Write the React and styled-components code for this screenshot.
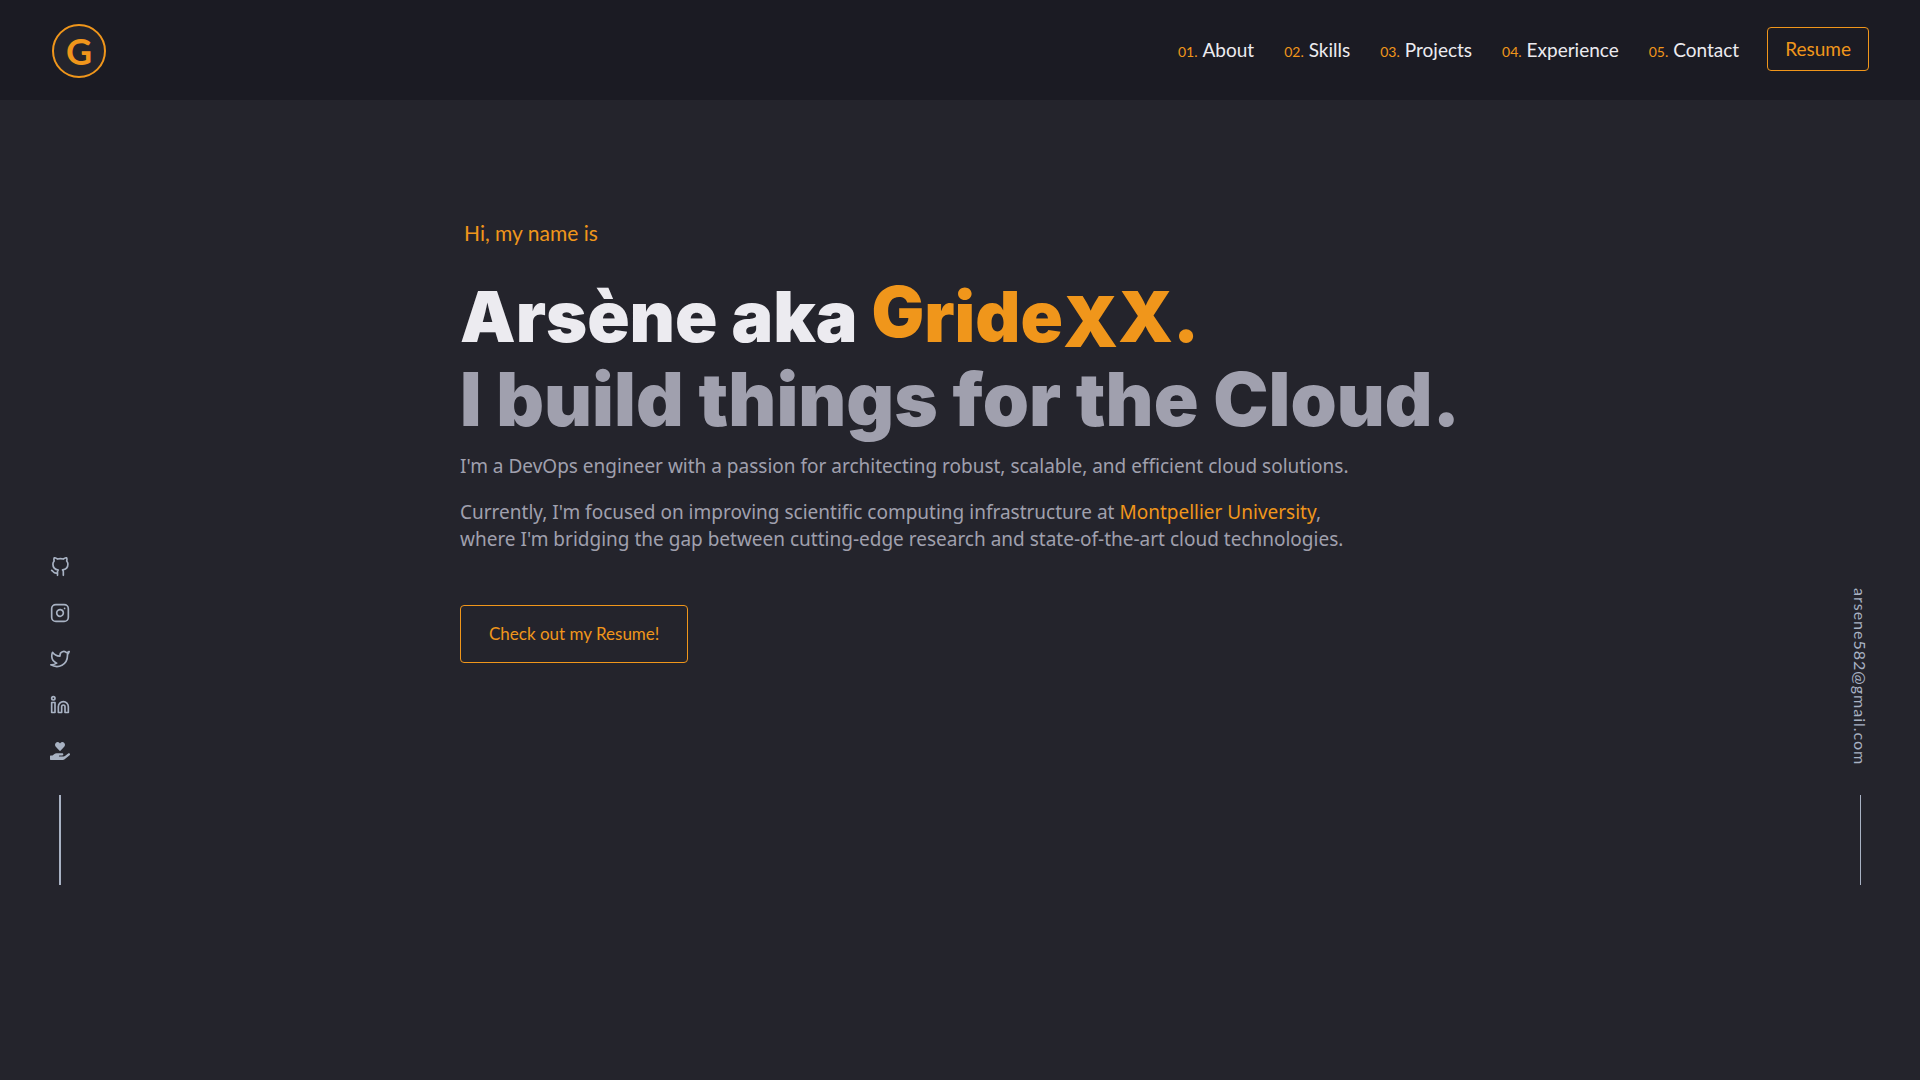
import React from "react";
import styled, { createGlobalStyle } from "styled-components";
import { FiGithub, FiInstagram, FiTwitter, FiLinkedin } from "react-icons/fi";
import { FaHandHoldingHeart } from "react-icons/fa";

const color = {
  page: "#24242c",
  header: "#1b1b23",
  accent: "#f0961b",
  light: "#ecebf0",
  muted: "#a0a0ae",
  slate: "#a8b2c3",
};

const display = `Inter, "Open Sans", sans-serif`;
const ui = `Lato, "Open Sans", sans-serif`;
const copy = `"Noto Sans", "Open Sans", sans-serif`;

const GlobalStyle = createGlobalStyle`
  *, *::before, *::after { box-sizing: border-box; }
  body {
    margin: 0;
    background: ${color.page};
    color: ${color.muted};
    font-family: ${ui};
  }
  a { color: inherit; text-decoration: none; }
`;

const Page = styled.div`
  min-height: 100vh;
  display: flex;
  flex-direction: column;
`;

const Header = styled.header`
  height: 100px;
  flex: none;
  display: flex;
  align-items: center;
  justify-content: space-between;
  padding: 2px 51px 0 52px;
  background: ${color.header};
`;

const Logo = styled.a`
  width: 54px;
  height: 54px;
  display: flex;
  align-items: center;
  justify-content: center;
  border: 2px solid ${color.accent};
  border-radius: 50%;
  background: ${color.page};
  && { color: ${color.accent}; }
  font: 700 36px/50px ${ui};
`;

const Nav = styled.nav`
  display: flex;
  align-items: center;
  gap: 28px;
`;

const NavList = styled.ol`
  display: flex;
  gap: 30px;
  margin: 0;
  padding: 0;
  list-style: none;
`;

const NavLink = styled.a`
  display: flex;
  align-items: baseline;
  gap: 5px;
  font-size: 19px;
  line-height: 24px;
  && { color: ${color.light}; }
`;

const NavNumber = styled.span`
  font-size: 14px;
  color: ${color.accent};
`;

const OutlineButton = styled.button`
  height: ${(p) => (p.$large ? 58 : 44)}px;
  margin-bottom: ${(p) => (p.$large ? 0 : 4)}px;
  padding: 0 ${(p) => (p.$large ? 28 : 17)}px 2px;
  border: 1px solid ${color.accent};
  border-radius: 4px;
  background: transparent;
  color: ${color.accent};
  font-family: ${ui};
  font-size: ${(p) => (p.$large ? 17 : 19)}px;
  cursor: pointer;
`;

const Body = styled.div`
  flex: 1;
  display: grid;
  grid-template-columns: 120px minmax(0, 1fr) 120px;
`;

const Rail = styled.aside`
  display: flex;
  flex-direction: column;
  align-items: center;
  justify-content: flex-end;
  gap: ${(p) => p.$gap}px;
  padding-bottom: 195px;
  color: ${color.slate};
`;

const RailLine = styled.span`
  width: ${(p) => p.$weight}px;
  height: 90px;
  background: ${color.slate};
`;

const SocialList = styled.ul`
  display: flex;
  flex-direction: column;
  gap: 26px;
  margin: 0;
  padding: 0;
  list-style: none;
`;

const SocialLink = styled.a`
  display: flex;
  font-size: 20px;
`;

const Email = styled.a`
  writing-mode: vertical-rl;
  font-size: 16px;
  line-height: 20px;
  letter-spacing: 1px;
`;

const Hero = styled.main`
  width: 100%;
  max-width: 1000px;
  margin: 0 auto;
  padding-top: 119px;
`;

const Greeting = styled.p`
  margin: 0 0 28px 4px;
  color: ${color.accent};
  font-size: 21px;
  line-height: 28px;
`;

const Headline = styled.h1`
  margin: 0;
  color: ${(p) => p.$tone};
  font: 900 ${(p) => p.$size}px/83px ${display};
  white-space: nowrap;
`;

const Brand = styled.span`
  color: ${color.accent};
`;

const Shifted = styled.span`
  display: inline-block;
  line-height: 1;
  vertical-align: ${(p) => p.$by}px;
`;

const Copy = styled.p`
  margin: 12px 0 0;
  font: 400 19px/27px ${copy};
  & + & { margin-top: 19px; }
  a { color: ${color.accent}; }
`;

const Action = styled.div`
  margin-top: 52px;
`;

const links = ["About", "Skills", "Projects", "Experience", "Contact"];

const socials = [
  ["GitHub", FiGithub],
  ["Instagram", FiInstagram],
  ["Twitter", FiTwitter],
  ["LinkedIn", FiLinkedin],
  ["Support me", FaHandHoldingHeart],
];

export default function App() {
  return (
    <Page>
      <GlobalStyle />
      <Header>
        <Logo href="#home" aria-label="Home">G</Logo>
        <Nav aria-label="Main">
          <NavList>
            {links.map((label, i) => (
              <li key={label}>
                <NavLink href={`#${label.toLowerCase()}`}>
                  <NavNumber>{`0${i + 1}.`}</NavNumber>
                  {label}
                </NavLink>
              </li>
            ))}
          </NavList>
          <OutlineButton type="button">Resume</OutlineButton>
        </Nav>
      </Header>
      <Body>
        <Rail $gap={34}>
          <SocialList>
            {socials.map(([name, Icon]) => (
              <li key={name}>
                <SocialLink href={`#${name}`} aria-label={name}>
                  <Icon />
                </SocialLink>
              </li>
            ))}
          </SocialList>
          <RailLine $weight={2} />
        </Rail>
        <Hero>
          <Greeting>Hi, my name is</Greeting>
          <Headline $tone={color.light} $size={70}>
            Arsène aka{" "}
            <Brand>
              <Shifted $by={5}>G</Shifted>ride<Shifted $by={-5}>X</Shifted>X.
            </Brand>
          </Headline>
          <Headline as="h2" $tone={color.muted} $size={74}>
            I build things for the Cloud.
          </Headline>
          <Copy>
            I'm a DevOps engineer with a passion for architecting robust, scalable, and efficient cloud solutions.
          </Copy>
          <Copy>
            Currently, I'm focused on improving scientific computing infrastructure at{" "}
            <a href="#university">Montpellier University</a>,<br />
            where I'm bridging the gap between cutting-edge research and state-of-the-art cloud technologies.
          </Copy>
          <Action>
            <OutlineButton type="button" $large>Check out my Resume!</OutlineButton>
          </Action>
        </Hero>
        <Rail $gap={30}>
          <Email href="mailto:arsene582@gmail.com">arsene582@gmail.com</Email>
          <RailLine $weight={1} />
        </Rail>
      </Body>
    </Page>
  );
}
